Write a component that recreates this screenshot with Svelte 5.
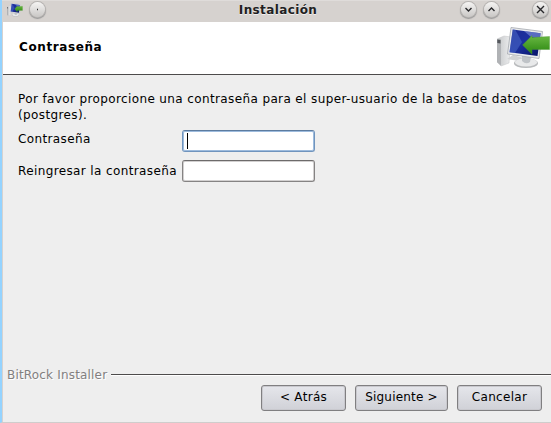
<script>
  let password = $state('');
  let confirmation = $state('');
</script>

{#snippet computer()}
  <svg viewBox="0 0 54 42" preserveAspectRatio="none" aria-hidden="true">
    <defs>
      <linearGradient id="screen" x1="0" y1="0" x2="1" y2="1">
        <stop offset="0" stop-color="#1c2b94" /><stop offset=".45" stop-color="#1c309f" /><stop offset="1" stop-color="#071365" />
      </linearGradient>
      <linearGradient id="arrow" x1="0" y1="0" x2="0" y2="1">
        <stop offset="0" stop-color="#6ab843" /><stop offset="1" stop-color="#29860f" />
      </linearGradient>
      <linearGradient id="metal" x1="0" y1="0" x2="1" y2="0">
        <stop offset="0" stop-color="#c4c6c8" /><stop offset="1" stop-color="#eeeff0" />
      </linearGradient>
    </defs>
    <path d="M0 12 7 9 14 10 12 36 4 39 0 35Z" fill="url(#metal)" stroke="#c4c6c8" stroke-width=".5" />
    <path d="M0 12 4 12.5V38.5L0 35Z" fill="#b0b2b5" />
    <path d="M.3 12.5 3.5 13V16.5L.3 16Z" fill="#55585d" />
    <path d="M10 32 16 28 27 31 22 34Z" fill="#d2d3d4" />
    <ellipse cx="29" cy="36.2" rx="12" ry="4.9" fill="#b9bbbd" />
    <ellipse cx="29" cy="35.3" rx="11.2" ry="4.1" fill="#e8e9ea" />
    <path d="M25 29 34 30 33 35Q29 38 25 34Z" fill="#bfc3c7" />
    <path d="M14 .5 45.5 4.5 42 31.5 10.5 27Z" fill="#e9ebed" stroke="#a4a8ae" stroke-width=".8" />
    <path d="M15.7 2.4 43.7 6.2 40.5 29 12.5 25.2Z" fill="url(#screen)" />
    <path d="M15.7 2.4 18.3 2.8 25 15 18 26 12.5 25.2Z" fill="#5575d1" opacity=".45" />
    <path d="M27 4 43.7 6.2 42.8 12 34 10Z" fill="#8496dc" opacity=".6" />
    <path d="M25.5 18 35 8.5V10.5L52.5 9.5V22.5H35V27.2Z" fill="url(#arrow)" stroke="#49962f" stroke-width=".4" />
  </svg>
{/snippet}

{#snippet control(path, label)}
  <button class="round" aria-label={label}>
    <svg viewBox="0 0 15 15"><path d={path} /></svg>
  </button>
{/snippet}

<main class="window">
  <header class="titlebar">
    <span class="app-icon">{@render computer()}</span>
    {@render control('M7 7.5H8', 'Menú')}
    <h1>Instalación</h1>
    {@render control('M4.5 6 7.5 9 10.5 6', 'Minimizar')}
    {@render control('M4.5 9 7.5 6 10.5 9', 'Maximizar')}
    <span class="close">{@render control('M4 4 11 11M11 4 4 11', 'Cerrar')}</span>
  </header>
  <section class="heading">
    <h2>Contraseña</h2>
    <span class="logo">{@render computer()}</span>
  </section>
  <form class="content">
    <p>Por favor proporcione una contraseña para el super-usuario de la base de datos<br />(postgres).</p>
    <div class="row">
      <label for="password">Contraseña</label>
      <div class="field focused"><i class="caret"></i><input id="password" type="password" bind:value={password} /></div>
    </div>
    <div class="row">
      <label class="repeat" for="confirmation">Reingresar la contraseña</label>
      <div class="field"><input id="confirmation" type="password" bind:value={confirmation} /></div>
    </div>
  </form>
  <div class="divider"><span>BitRock Installer</span><hr /></div>
  <footer>
    <button>&lt; Atrás</button>
    <button class="next">Siguiente &gt;</button>
    <button>Cancelar</button>
  </footer>
</main>

<style>
  :global(body) { margin: 0; overflow: hidden; }
  * { box-sizing: border-box; }
  .window {
    width: 551px; height: 423px; display: flex; flex-direction: column;
    background: #eee; color: #000; border-left: 2px solid #94d3ff; border-bottom: 1px solid #cfcdcc;
    box-shadow: inset 1px 0 #d6d2d0; font: 12px/16px "DejaVu Sans", sans-serif; letter-spacing: .38px;
  }
  h1, h2, p { margin: 0; }
  svg { display: block; width: 100%; height: 100%; }
  .titlebar { height: 22px; display: flex; align-items: flex-start; background: #d6d2cf; padding: 0 3px 0 5px; flex: none; border-top: 1px solid #dfdcda; }
  .app-icon { width: 16px; height: 14px; margin: 2px 7px 0 0; flex: none; }
  h1 { flex: 1; padding-left: 42px; text-align: center; font-size: 12px; line-height: 18px; color: #211e22; text-shadow: 0 1px #f1efee; }
  .round {
    width: 15px; height: 15px; padding: 0; border: 0; border-radius: 50%;
    background: linear-gradient(#f5f4f3, #c9c7c5); box-shadow: 0 0 0 1px #b7b4b2, 0 1px 1px 1px #999; margin: 1px 8px 0 0; flex: none;
  }
  .round path { fill: none; stroke: #28282b; stroke-width: 1.4; }
  .close { margin-left: 26px; display: flex; }
  .close :global(.round) { margin-right: 0; }
  .heading { height: 53px; flex: none; display: flex; margin-left: 1px; background: #fff; border-bottom: 1px solid #4d4b4b; justify-content: space-between; }
  h2 { font-size: 12px; line-height: 16px; padding: 17px 0 0 16px; letter-spacing: .6px; }
  .logo { width: 54px; height: 42px; margin-top: 5px; }
  .content { padding: 16px 0 0 16px; flex: 1; }
  .content p { white-space: nowrap; height: 39px; }
  .row { display: flex; height: 30px; }
  label { width: 164px; line-height: 18px; white-space: nowrap; }
  .repeat { line-height: 22px; }
  .field { width: 133px; height: 22px; border: 1px solid #858383; border-top-color: #6d6b6b; border-radius: 3px; background: #fff; display: flex; box-shadow: inset 0 0 0 1px #d2d0d0; }
  .focused { border-color: #7094bd; border-top-color: #5c7b9f; box-shadow: inset 0 0 0 1px #9dbbdd; }
  input { width: 100%; min-width: 0; border: 0; outline: 0; background: transparent; padding: 0 4px; }
  .caret { width: 1px; flex: none; height: 16px; margin: 2px 0 0 4px; background: #000; }
  .divider { display: flex; height: 17px; color: #828080; padding-left: 5px; align-items: center; flex: none; letter-spacing: .18px; }
  .divider span { width: 104px; white-space: nowrap; text-shadow: 1px 1px #fff; }
  hr { flex: 1; margin: 0; border: 0; border-top: 1px solid #4d4b4b; border-bottom: 1px solid #fff; }
  footer { height: 39px; flex: none; display: flex; justify-content: flex-end; gap: 9px; padding: 2px 9px 0 0; }
  footer button { width: 85px; height: 26px; border: 1px solid #807f81; border-radius: 3px; background: linear-gradient(#e5e6eb, #d0d1d7); color: #000; font: inherit; letter-spacing: .3px; padding: 0 0 2px; box-shadow: inset 0 0 0 1px #c9c9ce; white-space: nowrap; }
  footer .next { width: 93px; letter-spacing: .2px; }
</style>
